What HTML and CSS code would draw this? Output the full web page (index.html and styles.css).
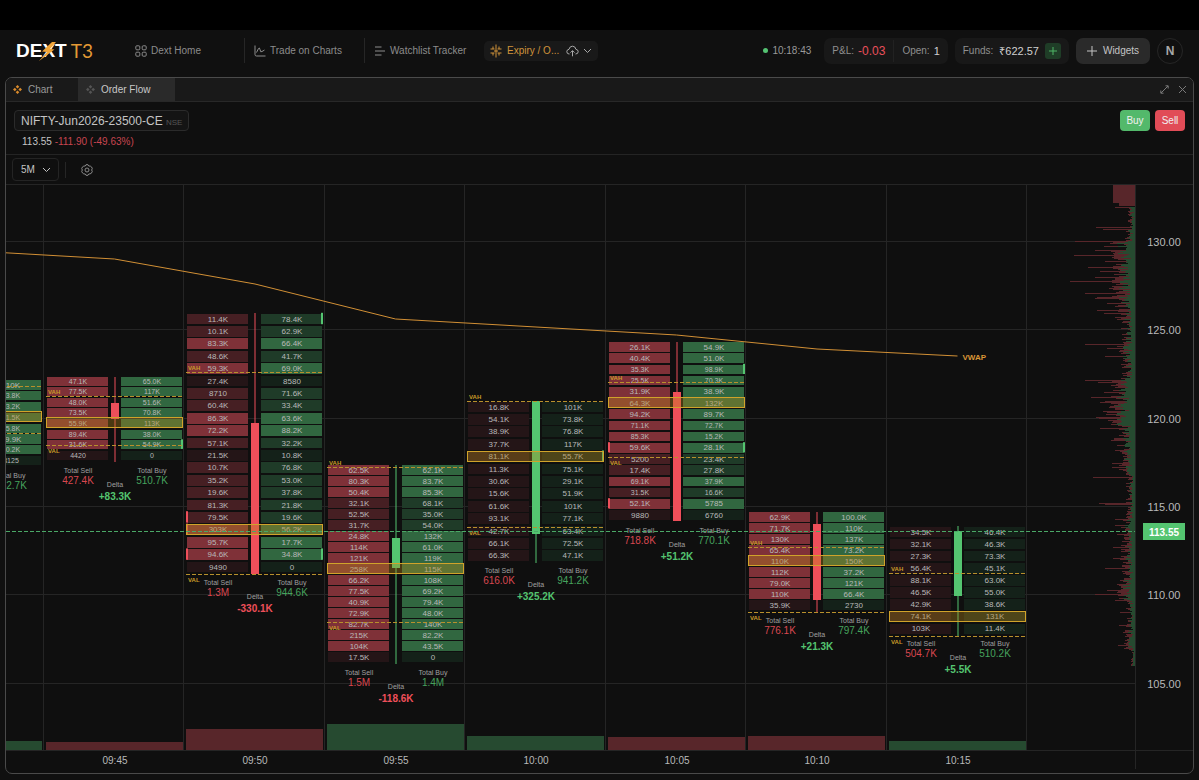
FILE: index.html
```
<!DOCTYPE html>
<html lang="en">
<head>
  <meta charset="UTF-8">
  <meta name="viewport" content="width=device-width, initial-scale=1.0">
  <title>Dext T3 - Order Flow</title>
  <link rel="stylesheet" href="styles.css">
</head>
<body>
  <div class="top-strip"></div>
  <header class="header">
    <a class="logo" href="#">
      <span class="logo-name">DEXT</span>
      <span class="logo-ver">T3</span>
      <svg class="logo-bolt" width="18" height="20" viewBox="0 0 18 20"><path d="M13 1L3 10.500L8 11L0 20L15.500 8.500L11 8L17 1Z"/></svg>
    </a>
    <nav class="nav">
      <a class="nav-item nav-home" href="#">
        <svg class="icon" width="12" height="12" viewBox="0 0 12 12"><rect x=".8" y=".8" width="4" height="4" rx="1"/><rect x="7.200" y=".8" width="4" height="4" rx="1"/><rect x=".8" y="7.200" width="4" height="4" rx="1"/><rect x="7.200" y="7.200" width="4" height="4" rx="1"/></svg>
        Dext Home
      </a>
      <a class="nav-item nav-trade" href="#">
        <svg class="icon" width="12" height="12" viewBox="0 0 12 12"><path d="M1 .5V9.500Q1 11 2.500 11H11.500M2.500 7.500L4.500 3.500Q5.500 2 6 4.500Q6.500 8 8 6.500L10.500 5"/></svg>
        Trade on Charts
      </a>
      <a class="nav-item nav-watch" href="#">
        <svg class="icon" width="12" height="12" viewBox="0 0 12 12"><path d="M1 2H7.500M1 6H11M1 10H7.500"/></svg>
        Watchlist Tracker
      </a>
    </nav>
    <button class="layout-btn">
      <svg class="icon" width="12" height="14" viewBox="0 0 12 14"><path d="M6 .5V13.500M3 2.500V5M9 2.500V5M.5 5H4.500M7.500 5H11.500M.5 9H4.500M7.500 9H11.500M3 9V11.500M9 9V11.500M4 7H8"/></svg>
      <span>Expiry / O...</span>
      <svg class="icon icon-cloud" width="13" height="12" viewBox="0 0 13 12"><path d="M3.500 9H3Q.7 8.800 .8 6.500Q1 4.500 3 4.300Q3.600 1.200 6.500 1.200Q9.300 1.200 9.900 4.300Q12.200 4.600 12.200 6.700Q12.100 9 9.500 9M6.500 11.300V5.800M4.500 7.600L6.500 5.600L8.500 7.600"/></svg>
      <svg class="icon icon-chev" width="9" height="6" viewBox="0 0 9 6"><path d="M1 1L4.500 4.500L8 1"/></svg>
    </button>
    <div class="status">
      <span class="clock"><i class="dot"></i>10:18:43</span>
      <div class="pill">
        <span>P&amp;L:</span><span class="pnl">-0.03</span>
        <i class="pill-line"></i>
        <span>Open:</span><span class="num">1</span>
      </div>
      <div class="pill pill-funds">
        <span>Funds:</span><span class="num">₹622.57</span>
        <button class="add-funds" aria-label="Add funds"><svg class="icon" width="10" height="10" viewBox="0 0 10 10"><path d="M5 1V9M1 5H9"/></svg></button>
      </div>
      <button class="widgets"><svg class="icon" width="10" height="10" viewBox="0 0 10 10"><path d="M5 0V10M0 5H10"/></svg>Widgets</button>
      <button class="avatar">N</button>
    </div>
  </header>

  <main class="panel">
    <div class="tabs">
      <button class="tab tab-chart">
        <svg class="gem" width="9" height="9" viewBox="0 0 9 9"><path d="M4.500 0L6.300 1.800L4.500 3.600L2.700 1.800ZM1.800 2.700L3.600 4.500L1.800 6.300L0 4.500ZM7.200 2.700L9 4.500L7.200 6.300L5.400 4.500ZM4.500 5.400L6.300 7.200L4.500 9L2.700 7.200Z"/></svg>
        Chart
      </button>
      <button class="tab tab-flow active">
        <svg class="gem" width="9" height="9" viewBox="0 0 9 9"><path d="M4.500 0L6.300 1.800L4.500 3.600L2.700 1.800ZM1.800 2.700L3.600 4.500L1.800 6.300L0 4.500ZM7.200 2.700L9 4.500L7.200 6.300L5.400 4.500ZM4.500 5.400L6.300 7.200L4.500 9L2.700 7.200Z"/></svg>
        Order Flow
      </button>
      <div class="tab-tools">
        <button aria-label="Expand"><svg class="icon" width="9" height="9" viewBox="0 0 9 9"><path d="M5.500 .8H8.200V3.500M8 1L1 8M.8 5.500V8.200H3.500"/></svg></button>
        <button aria-label="Close"><svg class="icon" width="9" height="9" viewBox="0 0 9 9"><path d="M1 1L8 8M8 1L1 8"/></svg></button>
      </div>
    </div>

    <section class="symbol-bar">
      <div>
        <button class="symbol">NIFTY-Jun2026-23500-CE <small>NSE</small></button>
        <p class="quote">113.55 <span>-111.90 (-49.63%)</span></p>
      </div>
      <div class="orders">
        <button class="buy">Buy</button>
        <button class="sell">Sell</button>
      </div>
    </section>

    <div class="toolbar">
      <div class="interval">
        <select aria-label="Interval"><option>5M</option><option>15M</option><option>1H</option></select>
        <svg class="icon" width="9" height="6" viewBox="0 0 9 6"><path d="M1 1L4.500 4.500L8 1"/></svg>
      </div>
      <i class="tool-line"></i>
      <button class="gear" aria-label="Settings"><svg class="icon" width="12" height="12" viewBox="0 0 12 12"><path d="M4.300 2L5 .7H7L7.700 2L9.300 2.100L10.600 3L11.300 4.700L10.600 6L11.300 7.300L10.400 9.200L9 9.900L7.700 10L7 11.300H5L4.300 10L2.800 9.900L1.500 9L.7 7.300L1.400 6L.7 4.700L1.500 2.900L2.800 2.100Z"/><circle cx="6" cy="6" r="2"/></svg></button>
    </div>

    <svg class="chart" id="chart"></svg>
  </main>
  <script src="chart.js"></script>
</body>
</html>
```
FILE: styles.css
```
* {
  box-sizing: border-box;
}
body {
  font-family: "Liberation Sans", Arial, sans-serif;
  font-size: 10px;
  margin: 0;
  background-color: #101010;
  color: #c4c4c4;
  min-height: 100vh;
  display: flex;
  flex-direction: column;
}
button, select {
  font: inherit;
  color: inherit;
  background: none;
  border: none;
  padding: 0;
  cursor: pointer;
}
a {
  color: inherit;
  text-decoration: none;
}
.icon {
  fill: none;
  stroke: currentColor;
  stroke-width: 1;
  flex: none;
}
.top-strip {
  height: 30px;
  background-color: #000;
}

/* header */
.header {
  height: 41px;
  margin-bottom: 6px;
  padding: 0 16px;
  display: flex;
  align-items: center;
  white-space: nowrap;
}
.logo {
  position: relative;
  display: flex;
  align-items: center;
  gap: 4px;
  width: 119px;
  font-size: 19px;
}
.logo-name {
  font-weight: bold;
  color: #fff;
}
.logo-ver {
  font-family: Lato, "Liberation Sans", sans-serif;
  color: #e39a35;
}
.logo-bolt {
  position: absolute;
  left: 23px;
  top: 2px;
  fill: #f0a53a;
}
.nav {
  display: flex;
  align-items: center;
  color: #8c8c8c;
}
.nav-item {
  display: flex;
  align-items: center;
  gap: 4px;
  height: 25px;
}
.nav-home {
  width: 110px;
  border-right: 1px solid #262626;
}
.nav-trade {
  width: 120px;
  padding-left: 9px;
  border-right: 1px solid #262626;
}
.nav-watch {
  width: 119px;
  padding-left: 9px;
}
.layout-btn {
  display: flex;
  align-items: center;
  width: 114px;
  height: 20px;
  padding: 0 6px;
  border-radius: 5px;
  background-color: #191919;
  color: #d0933b;
}
.layout-btn span {
  flex: 1;
  text-align: left;
  padding-left: 5px;
}
.icon-cloud, .icon-chev {
  color: #a8a8a8;
}
.icon-chev {
  margin-left: 4px;
}
.status {
  margin-left: auto;
  display: flex;
  align-items: center;
  gap: 7px;
}
.clock {
  display: flex;
  align-items: center;
  gap: 4px;
  margin-right: 6px;
  color: #999;
}
.dot {
  width: 5px;
  height: 5px;
  border-radius: 50%;
  background-color: #54c272;
}
.pill {
  display: flex;
  align-items: center;
  gap: 4px;
  height: 26px;
  padding: 0 8px;
  border-radius: 7px;
  background-color: #181818;
  color: #8f8f8f;
}
.pill-funds {
  gap: 6px;
}
.pnl {
  font-size: 12px;
  color: #ea4f5b;
}
.num {
  font-size: 11px;
  color: #d0d0d0;
}
.pill-line {
  width: 1px;
  height: 22px;
  margin: 0 4px;
  background-color: #222;
}
.add-funds {
  display: flex;
  align-items: center;
  justify-content: center;
  width: 16px;
  height: 16px;
  border-radius: 3px;
  background-color: #1f3d27;
  color: #4fb667;
}
.widgets {
  display: flex;
  align-items: center;
  justify-content: center;
  gap: 6px;
  width: 74px;
  height: 26px;
  border-radius: 7px;
  background-color: #2a2a2a;
  color: #c4c4c4;
}
.avatar {
  width: 26px;
  height: 26px;
  border: 1px solid #262626;
  border-radius: 50%;
  font-size: 12px;
  font-weight: bold;
  color: #a8a8a8;
}

/* widget panel */
.panel {
  flex: 1;
  display: flex;
  flex-direction: column;
  margin: 0 5px 6px;
  border: 1px solid #4a4a4a;
  border-radius: 7px;
  background-color: #0f0f0f;
  overflow: hidden;
}
.tabs {
  display: flex;
  height: 24px;
  background-color: #191919;
  border-bottom: 1px solid #282828;
}
.tab {
  display: flex;
  align-items: center;
  gap: 6px;
  padding-left: 7px;
  color: #9a9a9a;
}
.tab-chart {
  width: 72px;
}
.tab-flow {
  width: 97px;
  padding-left: 8px;
}
.tab.active {
  background-color: #2a2a2a;
  color: #c8c8c8;
}
.gem {
  fill: #d98a2b;
}
.active .gem {
  fill: #555;
}
.tab-tools {
  display: flex;
  align-items: center;
  gap: 9px;
  margin-left: auto;
  padding-right: 6px;
  color: #7a7a7a;
}
.tab-tools button {
  display: flex;
}
.symbol-bar {
  display: flex;
  justify-content: space-between;
  align-items: flex-start;
  height: 53px;
  padding: 8px 8px 0;
  border-bottom: 1px solid #242424;
}
.symbol {
  height: 21px;
  padding: 0 6px;
  border: 1px solid #2b2b2b;
  border-radius: 4px;
  background-color: #141414;
  font-size: 12px;
}
.symbol small {
  font-size: 8px;
  color: #555;
}
.quote {
  margin: 5px 0 0 8px;
}
.quote span {
  color: #c8454f;
}
.orders {
  display: flex;
  gap: 5px;
}
.orders button {
  width: 30px;
  height: 21px;
  border-radius: 4px;
  color: #f0f0f0;
}
.orders .buy {
  background-color: #53b96b;
}
.orders .sell {
  background-color: #e14c57;
}
.toolbar {
  display: flex;
  align-items: center;
  height: 29px;
  padding-left: 6px;
}
.interval {
  position: relative;
  display: flex;
  align-items: center;
}
.interval select {
  width: 47px;
  height: 23px;
  padding-left: 8px;
  border: 1px solid #242424;
  border-radius: 4px;
  appearance: none;
}
.interval .icon {
  position: absolute;
  right: 8px;
  pointer-events: none;
}
.tool-line {
  width: 1px;
  height: 16px;
  margin: 0 15px 0 6px;
  background-color: #262626;
}
.gear {
  display: flex;
  color: #8a8a8a;
}

/* order flow chart */
.chart {
  display: block;
  flex: 1;
  width: 100%;
  min-height: 589px;
}
.chart text {
  text-anchor: middle;
  dominant-baseline: central;
  fill: #b9b9b9;
}
.grid {
  stroke: #252525;
}
.sell-1 { fill: #241517; }
.sell-2 { fill: #461f23; }
.sell-3 { fill: #7f3138; }
.buy-1 { fill: #142119; }
.buy-2 { fill: #1f3b28; }
.buy-3 { fill: #316740; }
.up { fill: #54c470; }
.down { fill: #ee4f5a; }
.vol-up { fill: #264a30; }
.vol-down { fill: #58262a; }
.poc {
  fill: #b98a1a;
  fill-opacity: .35;
  stroke: #d0a32a;
}
.value-line {
  stroke: #b8902c;
  stroke-dasharray: 4 2;
}
.chart .cell-text { font-size: 8px; }
.chart .cell-small { font-size: 7px; }
.chart .price { font-size: 11px; }
.chart .value-label {
  font-size: 6px;
  font-weight: bold;
  fill: #c79b28;
  text-anchor: start;
}
.chart .total-label {
  font-size: 7px;
  fill: #a0a0a0;
}
.chart .total-sell { fill: #d9474f; }
.chart .total-buy { fill: #46a35d; }
.chart .delta-up, .chart .delta-down {
  font-size: 10px;
  font-weight: bold;
}
.chart .delta-up { fill: #54c470; }
.chart .delta-down { fill: #ee4f5a; }
.vwap {
  fill: none;
  stroke: #d18f35;
}
.chart .vwap-label {
  font-size: 8px;
  font-weight: bold;
  fill: #d99637;
  text-anchor: start;
}
.live-line {
  stroke: #4aa866;
  stroke-dasharray: 4 2;
}
.chart .live-text {
  font-weight: bold;
  fill: #fff;
}
```
FILE: chart.js
```
const chart = document.getElementById('chart');

const SLOT = 140.5;      // width of one 5 minute column
const PRICE_STEP = 88.3; // height of 5 points
const LIVE_Y = 348;

// rows: [sell, buy], heat: strength of each row from 1 to 3
const candles = [
  { time: '', y: 201, step: 10.8, poc: 3, vah: 202, val: 249, wick: [196, 282], body: [210, 230], up: true,
    sell: '62.1K 40.2K 71.8K 90.4K 66.3K 51.0K 38.7K 5120', buy: '110K 53.8K 93.2K 81.5K 35.8K 49.9K 70.2K 8125',
    heat: '33333331', edges: [], totals: ['498.2K', '562.7K', '+64.5K'], vol: 9 },
  { time: '09:45', y: 197, step: 10.6, poc: 4, vah: 212, val: 261, wick: [193, 278], body: [219, 235], up: false,
    sell: '47.1K 77.5K 48.0K 73.5K 55.9K 89.4K 31.6K 4420', buy: '65.0K 117K 51.6K 70.8K 113K 38.0K 54.9K 0',
    heat: '33333331', edges: ['b6'], totals: ['427.4K', '510.7K', '+83.3K'], vol: 8 },
  { time: '09:50', y: 135, step: 12.4, poc: 17, vah: 188, val: 390, wick: [129, 390], body: [239, 390], up: false,
    sell: '11.4K 10.1K 83.3K 48.6K 59.3K 27.4K 8710 60.4K 86.3K 72.2K 57.1K 21.5K 10.7K 35.2K 19.6K 81.3K 79.5K 303K 95.7K 94.6K 9490',
    buy: '78.4K 62.9K 66.4K 41.7K 69.0K 8580 71.6K 33.4K 63.6K 88.2K 32.2K 10.8K 76.8K 53.0K 37.8K 21.8K 19.6K 56.2K 17.7K 34.8K 0',
    heat: '223231223321222223331', edges: ['b0', 's16', 's17', 's19', 'b19'], totals: ['1.3M', '944.6K', '-330.1K'], vol: 21 },
  { time: '09:55', y: 286, step: 11, poc: 9, vah: 283, val: 438, wick: [281, 480], body: [354, 384], up: true,
    sell: '62.5K 80.3K 50.4K 32.1K 52.5K 31.7K 24.8K 114K 121K 258K 66.2K 77.5K 40.9K 72.9K 82.7K 215K 104K 17.5K',
    buy: '62.1K 83.7K 85.3K 68.1K 35.0K 54.0K 132K 61.0K 119K 115K 108K 69.2K 79.4K 48.0K 140K 82.2K 43.5K 0',
    heat: '333222333333333331', edges: [], totals: ['1.5M', '1.4M', '-118.6K'], vol: 26 },
  { time: '10:00', y: 223, step: 12.4, poc: 4, vah: 217, val: 343, wick: [217, 379], body: [217, 350], up: true,
    sell: '16.8K 54.1K 38.9K 37.7K 81.1K 11.3K 30.6K 15.6K 61.6K 93.1K 42.7K 66.1K 66.3K',
    buy: '101K 73.8K 76.8K 117K 55.7K 75.1K 29.1K 51.9K 101K 77.1K 63.4K 72.5K 47.1K',
    heat: '1111111111111', edges: ['b4'], totals: ['616.0K', '941.2K', '+325.2K'], vol: 14 },
  { time: '10:05', y: 163, step: 11.2, poc: 5, vah: 198, val: 273, wick: [158, 337], body: [208, 337], up: false,
    sell: '26.1K 40.4K 35.3K 25.5K 31.9K 64.3K 94.2K 71.1K 85.3K 59.6K 5200 17.4K 69.1K 31.5K 52.1K 9880',
    buy: '54.9K 51.0K 98.9K 70.3K 38.9K 132K 89.7K 72.7K 15.2K 28.1K 23.4K 27.8K 37.9K 16.6K 5785 6760',
    heat: '3333333333223231', edges: ['b2', 's9', 'b9', 's14'], totals: ['718.8K', '770.1K', '+51.2K'], vol: 13 },
  { time: '10:10', y: 333, step: 11, poc: 4, vah: 363, val: 428, wick: [328, 428], body: [340, 416], up: false,
    sell: '62.9K 71.7K 130K 65.4K 110K 112K 79.0K 110K 35.9K', buy: '100.0K 110K 137K 73.2K 150K 37.2K 121K 66.4K 2730',
    heat: '333333331', edges: [], totals: ['776.1K', '797.4K', '+21.3K'], vol: 14 },
  { time: '10:15', y: 348, step: 12.1, poc: 7, vah: 389, val: 452, wick: [342, 452], body: [347, 412], up: true,
    sell: '34.5K 32.1K 27.3K 56.4K 88.1K 46.5K 42.9K 74.1K 103K', buy: '46.4K 46.3K 73.3K 45.1K 63.0K 55.0K 38.6K 131K 11.4K',
    heat: '111111111', edges: [], totals: ['504.7K', '510.2K', '+5.5K'], vol: 9 }
];
const volColors = ['up', 'down', 'down', 'up', 'up', 'down', 'down', 'up'];
const vwap = [67, 75, 100, 135, 143, 151, 165, 172];

// volume profile: [from y, usual bar length]
const profileBase = [[23, 6], [46, 12], [57, 24], [72, 20], [84, 20], [116, 17], [136, 12], [161, 16], [176, 12], [196, 23],
  [216, 27], [241, 18], [256, 15], [291, 8], [336, 13], [376, 11], [396, 17], [416, 8], [446, 10], [466, 4]];
// single long bars, y: length
const profilePeaks = { 23: 20, 43: 39, 45: 32, 57: 60, 62: 31, 66: 40, 71: 61, 77: 30, 83: 47, 87: 35, 93: 40, 97: 65, 104: 26,
  109: 50, 113: 38, 114: 40, 119: 28, 126: 38, 129: 31, 160: 50, 164: 28, 172: 30, 196: 50, 198: 37, 208: 31, 213: 44,
  218: 35, 227: 32, 233: 39, 234: 36, 244: 35, 256: 24, 266: 20, 279: 23, 283: 23, 293: 42, 319: 36, 320: 30, 335: 20, 341: 20,
  350: 18, 363: 22, 374: 22, 384: 30, 396: 15, 406: 28, 410: 40, 416: 20, 428: 15, 441: 16, 448: 12, 461: 17 };

function add(name, attrs, text) {
  const el = document.createElementNS('http://www.w3.org/2000/svg', name);
  Object.entries(attrs).forEach(([key, value]) => el.setAttribute(key, value));
  if (text !== undefined) el.textContent = text;
  chart.appendChild(el);
}

function rect(cls, x, y, width, height) {
  add('rect', { class: cls, x, y, width, height });
}

function line(cls, x1, y1, x2, y2) {
  add('line', { class: cls, x1, y1, x2, y2 });
}

function label(cls, x, y, text) {
  // skip labels that are scrolled out on the left
  if (x < 0) return;
  add('text', { class: cls, x, y }, text);
}

function drawCandle(c, x, bottom, volColor) {
  const sells = c.sell.split(' ');
  const buys = c.buy.split(' ');
  const height = c.step - 1.6;
  const mid = x + 72;
  const color = c.up ? 'up' : 'down';

  rect('vol-' + volColor, x + 3, bottom - c.vol, 137, c.vol);
  sells.forEach((value, i) => {
    const y = c.y + i * c.step;
    const top = Math.round(y - height / 2);
    const cell = Math.round(y + height / 2) - top;
    // low cells get the smaller text
    const size = cell < 10 ? 'cell-small' : 'cell-text';
    rect('sell-' + c.heat[i], x + 4, top, 61, cell);
    rect('buy-' + c.heat[i], x + 78, top, 61, cell);
    label(size, x + 35, y, value);
    label(size, x + 109, y, buys[i]);
  });
  c.edges.forEach(edge => {
    const y = c.y + edge.slice(1) * c.step - c.step / 2;
    if (edge[0] === 'b') rect('up', x + 138, y, 2, c.step - 1);
    else rect('down', x + 3, y, 2, c.step - 1);
  });
  rect(color, mid - 0.5, c.wick[0], 1, c.wick[1] - c.wick[0]);
  rect(color, mid - 4, c.body[0], 8, c.body[1] - c.body[0]);
  rect('poc', x + 3.5, Math.round(c.y + c.poc * c.step) - 5.5, 136, 10);
  line('value-line', x + 3, c.vah + 0.5, x + 140, c.vah + 0.5);
  line('value-line', x + 3, c.val + 0.5, x + 140, c.val + 0.5);
  label('value-label', x + 5, c.vah - 4, 'VAH');
  label('value-label', x + 5, c.val + 6, 'VAL');

  const end = c.y + (sells.length - 1) * c.step;
  label('total-label', x + 35, end + 15, 'Total Sell');
  label('total-sell', x + 35, end + 25, c.totals[0]);
  label('total-label', x + 109, end + 15, 'Total Buy');
  label('total-buy', x + 109, end + 25, c.totals[1]);
  label('total-label', mid, end + 29, 'Delta');
  label(c.totals[2][0] === '+' ? 'delta-up' : 'delta-down', mid, end + 41, c.totals[2]);
}

function drawProfile(axisX) {
  rect('vol-down', axisX - 22, 1, 22, 18);
  rect('vol-down', axisX - 16, 19, 16, 3);
  for (let y = 23; y < 482; y++) {
    const base = profileBase.filter(b => b[0] <= y).pop()[1];
    const noise = Math.abs(Math.sin(y * 12.9898) * 43758.5453) % 1;
    const noise2 = Math.abs(Math.sin(y * 78.233) * 12543.123) % 1;
    const total = profilePeaks[y] || Math.round(base * (0.3 + noise * 0.9));
    const buy = Math.min(total, Math.round(base * (0.2 + noise2 * 0.6)));
    rect('vol-down', axisX - total, y, total - buy, 1);
    rect('vol-up', axisX - buy, y, buy, 1);
  }
}

function draw() {
  const width = chart.clientWidth;
  const height = chart.clientHeight;
  const axisX = width - 58;
  const bottom = height - 23;
  const first = axisX - 109 - SLOT * 8;
  chart.innerHTML = '';

  line('grid', 0, 0.5, width, 0.5);
  for (let i = 0; i < 6; i++) {
    const y = Math.round(57 + i * PRICE_STEP) + 0.5;
    line('grid', 0, y, axisX, y);
    label('price', axisX + 29, y, (130 - i * 5).toFixed(2));
  }
  for (let i = 1; i < 9; i++) {
    const x = Math.round(first + i * SLOT) + 0.5;
    line('grid', x, 0, x, bottom);
  }

  drawProfile(axisX);
  candles.forEach((c, i) => {
    const x = Math.round(first + i * SLOT);
    drawCandle(c, x, bottom, volColors[i]);
    if (c.time) label('time', x + 72, bottom + 10, c.time);
  });

  const points = vwap.map((y, i) => (first + i * SLOT + 72) + ',' + y);
  add('polyline', { class: 'vwap', points: points.join(' ') });
  label('vwap-label', first + 7 * SLOT + 77, 173, 'VWAP');

  line('grid', axisX + 0.5, 0, axisX + 0.5, height - 4);
  line('grid', 0, bottom + 0.5, width, bottom + 0.5);
  line('live-line', 0, LIVE_Y - 0.5, axisX, LIVE_Y - 0.5);
  rect('up', axisX + 8, LIVE_Y - 9, 42, 17);
  label('live-text', axisX + 29, LIVE_Y, '113.55');
}

draw();
window.addEventListener('resize', draw);
```
